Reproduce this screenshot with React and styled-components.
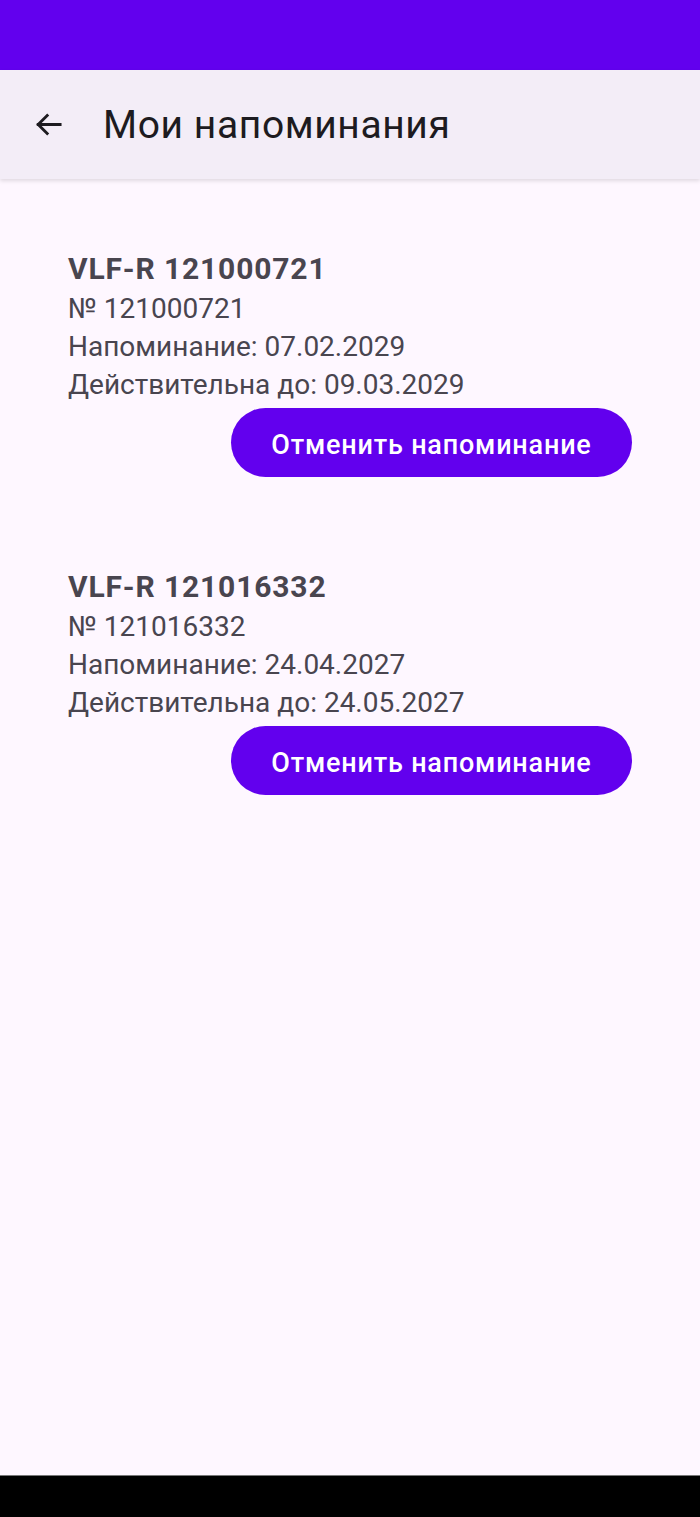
import React from "react";
import styled, { createGlobalStyle } from "styled-components";

// STYLES

const GlobalStyle = createGlobalStyle`
  html, body {
    margin: 0;
    padding: 0;
    height: 100%;
  }
  body {
    font-family: Roboto, "Noto Sans", "Liberation Sans", sans-serif;
    background: #fef7ff;
  }
  #root {
    height: 100%;
  }
`;

const Screen = styled.div`
  display: flex;
  flex-direction: column;
  height: 1517px;
  background: #fef7ff;
`;

const StatusBar = styled.div`
  height: 70px;
  background: #6200ee;
  flex-shrink: 0;
`;

const AppBar = styled.header`
  display: flex;
  align-items: center;
  height: 109px;
  background: #f3edf7;
  box-shadow: 0 2px 4px rgba(0, 0, 0, 0.12);
  position: relative;
  z-index: 1;
  flex-shrink: 0;
`;

const BackButton = styled.button`
  display: flex;
  align-items: center;
  justify-content: center;
  width: 48px;
  height: 48px;
  margin-left: 24px;
  padding: 0;
  background: none;
  border: none;
  color: #1d1b20;
  cursor: pointer;
`;

const Title = styled.h1`
  margin: 0 0 0 31px;
  font-size: 39px;
  font-weight: 400;
  letter-spacing: 0.6px;
  color: #1d1b20;
`;

const List = styled.ul`
  flex: 1;
  list-style: none;
  margin: 0;
  padding: 71px 68px 0;
`;

const Card = styled.li`
  display: flex;
  flex-direction: column;
  margin-bottom: 91px;
`;

const CardTitle = styled.h2`
  margin: 0 0 2px;
  font-size: 30px;
  line-height: 38px;
  font-weight: 700;
  letter-spacing: 0.85px;
  color: #49454f;
`;

const Line = styled.p`
  margin: 0;
  font-size: 28px;
  line-height: 38px;
  color: #49454f;
`;

const CancelBtn = styled.button`
  align-self: flex-end;
  margin-top: 4px;
  height: 69px;
  width: 401px;
  padding: 4px 0 0;
  background: #6200ee;
  border: none;
  border-radius: 35px;
  font-family: Roboto, "Noto Sans", sans-serif;
  font-size: 27px;
  font-weight: 500;
  letter-spacing: 0.8px;
  color: #ffffff;
  cursor: pointer;
`;

const NavBar = styled.div`
  height: 41px;
  background: #000000;
  border-top: 1px solid #777;
  flex-shrink: 0;
`;

// DATA

const reminders = [
  { id: "121000721", remind: "07.02.2029", until: "09.03.2029" },
  { id: "121016332", remind: "24.04.2027", until: "24.05.2027" }
];

// COMPONENT

const App = () => (
  <Screen>
    <GlobalStyle />
    <StatusBar />
    <AppBar>
      <BackButton type="button" aria-label="Назад">
        <svg width="31" height="31" viewBox="0 0 24 24" fill="none">
          <path
            d="M21 12H4M11 5l-7 7 7 7"
            stroke="currentColor"
            strokeWidth="2.2"
            strokeLinecap="square"
          />
        </svg>
      </BackButton>
      <Title>Мои напоминания</Title>
    </AppBar>
    <List>
      {reminders.map(r => (
        <Card key={r.id}>
          <CardTitle>VLF-R {r.id}</CardTitle>
          <Line>№ {r.id}</Line>
          <Line>Напоминание: {r.remind}</Line>
          <Line>Действительна до: {r.until}</Line>
          <CancelBtn type="button">Отменить напоминание</CancelBtn>
        </Card>
      ))}
    </List>
    <NavBar />
  </Screen>
);

export default App;
